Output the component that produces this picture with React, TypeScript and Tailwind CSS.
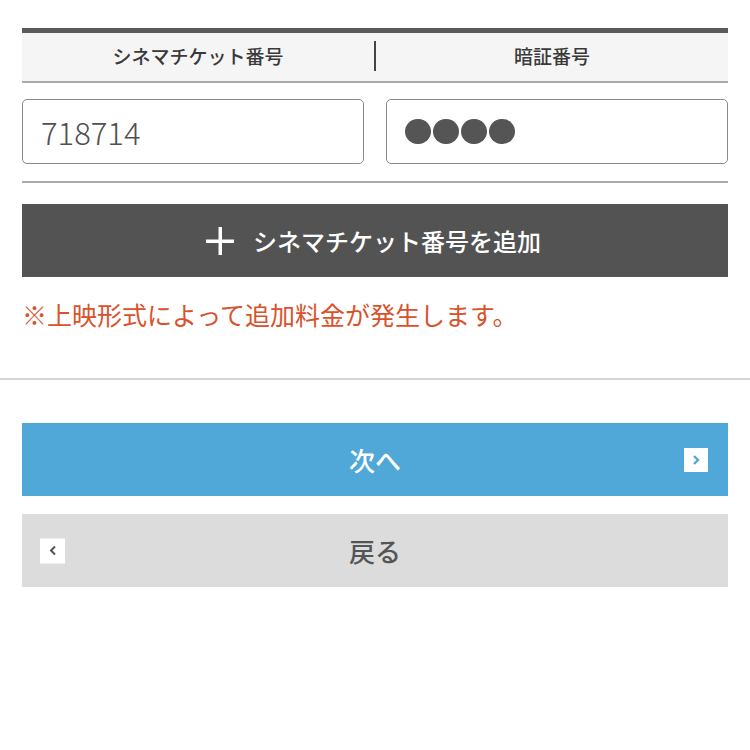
import React from "react";

const jp = { fontFamily: '"Noto Sans CJK JP", "Noto Sans", sans-serif' };

export default function App() {
  return (
    <div className="w-[750px] h-[750px] bg-white overflow-hidden" style={jp}>
      <div className="px-[22px] pt-[28px]">
        {/* header */}
        <div className="border-t-[5px] border-[#5b5b5b] bg-[#f5f5f5] border-b-2 border-b-[#aaaaaa] h-[55px] flex items-center pb-[3px]">
          <div className="flex-1 text-center text-[19px] font-medium text-[#3a3a3a] leading-none">シネマチケット番号</div>
          <div className="w-[2px] h-[30px] bg-[#444]" />
          <div className="flex-1 text-center text-[19px] font-medium text-[#3a3a3a] leading-none">暗証番号</div>
        </div>
        {/* inputs */}
        <div className="mt-[16px] grid grid-cols-2 gap-[22px]">
          <div className="h-[65px] border-[1.5px] border-[#8a8a8a] rounded-[5px] flex items-center pl-[18px] text-[31px] font-light text-[#505050] leading-none">
            718714
          </div>
          <div className="h-[65px] border-[1.5px] border-[#8a8a8a] rounded-[5px] flex items-center pl-[18px] gap-[2px]">
            {[0, 1, 2, 3].map((i) => (
              <span key={i} className="block w-[26px] h-[25px] rounded-full bg-[#555]" />
            ))}
          </div>
        </div>
        <div className="mt-[17px] border-t-2 border-[#aaaaaa]" />
        {/* add button */}
        <div className="mt-[21px] h-[73px] bg-[#535353] flex items-center justify-center text-white">
          <svg width="28" height="28" viewBox="0 0 28 28" className="mr-[19px] -ml-[3px]">
            <rect x="12.5" y="0" width="3.5" height="28" fill="#fff" />
            <rect x="0" y="12.5" width="28" height="3.5" fill="#fff" />
          </svg>
          <span className="text-[24px] font-medium leading-none">シネマチケット番号を追加</span>
        </div>
        <p className="mt-[20px] mb-[47px] text-[25px] leading-[34px] text-[#d9522c]">
          ※上映形式によって追加料金が発生します。
        </p>
      </div>
      <div className="border-t-2 border-[#d4d4d4]" />
      <div className="px-[22px] pt-[43px]">
        <div className="h-[73px] bg-[#4fa8d8] flex items-center justify-center relative">
          <span className="text-[26px] font-medium text-white leading-none">次へ</span>
          <span className="absolute right-[20px] top-1/2 -translate-y-1/2 w-[24px] h-[24px] bg-white flex items-center justify-center">
            <svg width="10" height="12" viewBox="0 0 10 12">
              <path d="M3 2 L7 6 L3 10" stroke="#4fa8d8" strokeWidth="2.4" fill="none" />
            </svg>
          </span>
        </div>
        <div className="mt-[18px] h-[73px] bg-[#dcdcdc] flex items-center justify-center relative">
          <span className="absolute left-[18px] top-1/2 -translate-y-1/2 w-[25px] h-[25px] bg-white flex items-center justify-center">
            <svg width="10" height="12" viewBox="0 0 10 12">
              <path d="M7 2 L3 6 L7 10" stroke="#555" strokeWidth="2" fill="none" />
            </svg>
          </span>
          <span className="text-[26px] font-medium text-[#555] leading-none">戻る</span>
        </div>
      </div>
    </div>
  );
}
